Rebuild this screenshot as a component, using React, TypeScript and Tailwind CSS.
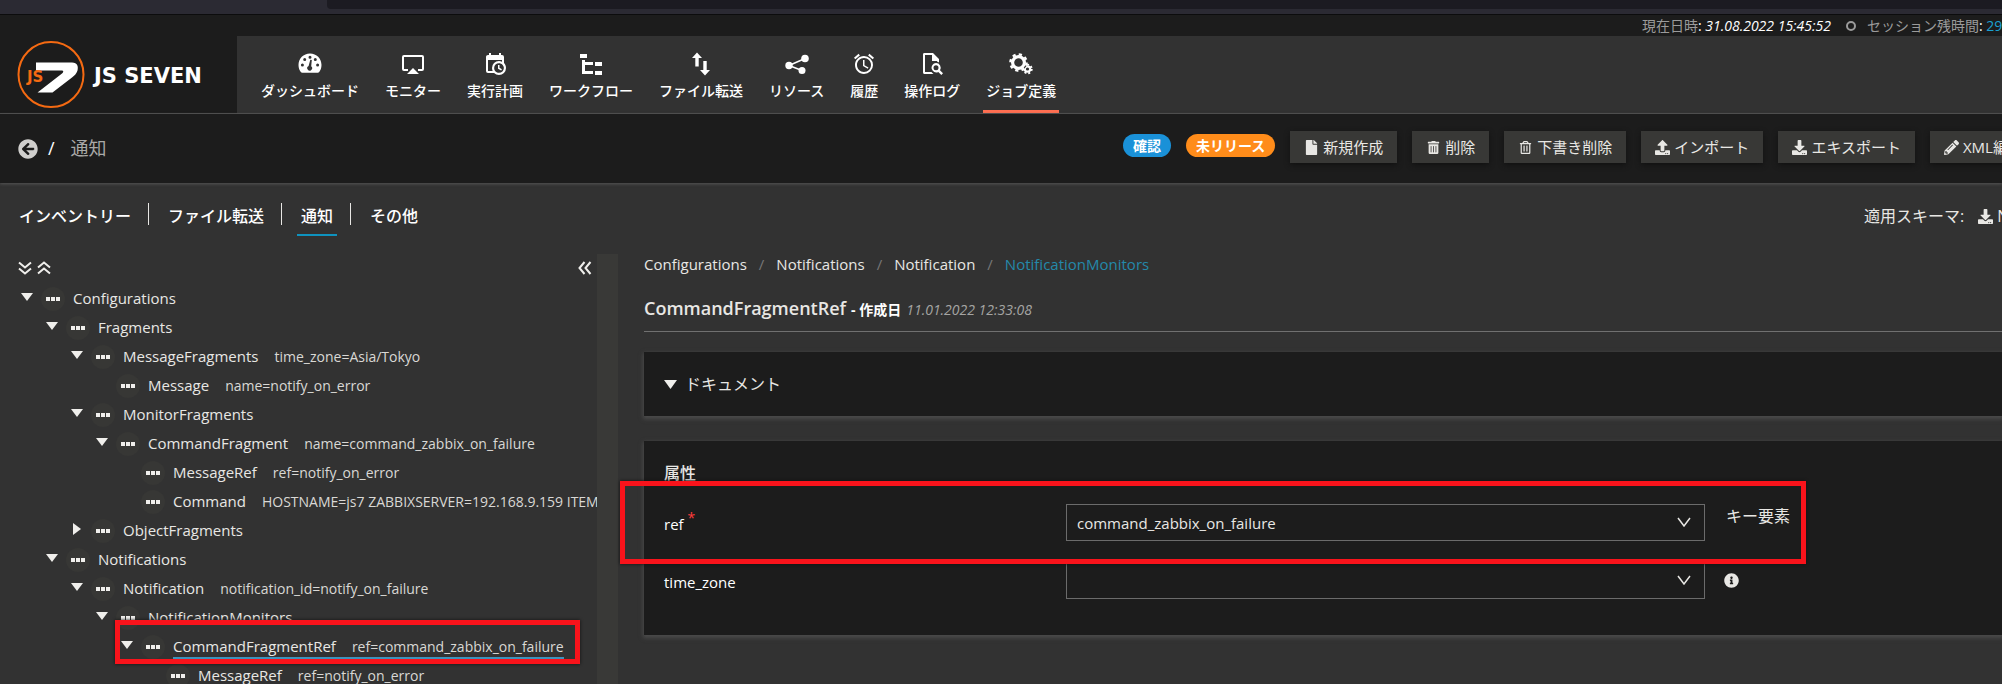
import type { ReactNode } from "react";
import {
  FaArrowCircleLeft,
  FaDownload,
  FaFile,
  FaInfoCircle,
  FaPencilAlt,
  FaRegTrashAlt,
  FaTrashAlt,
  FaUpload,
} from "react-icons/fa";
import { MdAlarm } from "react-icons/md";

const svg = "h-6 w-6 fill-current";

function GaugeIcon() {
  return (
    <svg viewBox="0 0 24 24" className={svg} aria-hidden="true">
      <path
        fillRule="evenodd"
        d="M12 1.500C5.400 1.500 0.500 6.500 0.500 13c0 3 .9 5.200 2.300 7 .4.500.8.7 1.400.7h15.600c.6 0 1-.2 1.400-.7 1.400-1.800 2.300-4 2.300-7C23.500 6.500 18.600 1.500 12 1.500ZM12 3.700a1.500 1.500 0 1 1 0 3 1.500 1.500 0 0 1 0-3ZM6.700 6a1.500 1.500 0 1 1 0 3 1.500 1.500 0 0 1 0-3ZM17.300 6a1.500 1.500 0 1 1 0 3 1.500 1.500 0 0 1 0-3ZM4.400 11.500a1.500 1.500 0 1 1 0 3 1.500 1.500 0 0 1 0-3ZM19.600 11.500a1.500 1.500 0 1 1 0 3 1.500 1.500 0 0 1 0-3ZM13.800 8l-.6 6.300a2.400 2.400 0 1 1-2.600-.3l1.700-6.200Z"
      />
    </svg>
  );
}

function MonitorIcon() {
  return (
    <svg viewBox="0 0 24 24" className={svg} aria-hidden="true">
      <path d="M6 22h12l-6-6-6 6ZM21 3H3a2 2 0 0 0-2 2v12a2 2 0 0 0 2 2h4v-2H3V5h18v12h-4v2h4a2 2 0 0 0 2-2V5a2 2 0 0 0-2-2Z" />
    </svg>
  );
}

function PlanIcon() {
  return (
    <svg viewBox="0 0 24 24" className={svg} aria-hidden="true">
      <path d="M15 13h1.500v2.820l2.440 1.410-.75 1.300L15 16.690V13m4-5H5v11h4.670c-.43-.91-.67-1.930-.67-3a7 7 0 0 1 7-7c1.070 0 2.090.24 3 .67V8M5 21a2 2 0 0 1-2-2V5c0-1.110.89-2 2-2h1V1h2v2h8V1h2v2h1a2 2 0 0 1 2 2v6.100c1.240 1.260 2 2.990 2 4.900a7 7 0 0 1-7 7c-1.910 0-3.640-.76-4.900-2H5m11-9.850A4.850 4.850 0 0 0 11.150 16c0 2.680 2.170 4.850 4.850 4.850A4.850 4.850 0 0 0 20.850 16c0-2.680-2.170-4.850-4.850-4.850Z" />
    </svg>
  );
}

function TreeIcon() {
  return (
    <svg viewBox="0 0 24 24" className={svg} aria-hidden="true">
      <path d="M1 2h7v4H1ZM16 10h7v4h-7ZM16 19h7v4h-7ZM14 13H6v6h8v3H3V8h3v2h8Z" />
    </svg>
  );
}

function TransferIcon() {
  return (
    <svg viewBox="0 0 24 24" className={svg} aria-hidden="true">
      <path d="M8 0.500 13 6H9.700v8.500H6.300V6H3ZM16 23.500 11 18h3.300V9h3.400v9H21Z" />
    </svg>
  );
}

function ShareIcon() {
  return (
    <svg viewBox="0 0 24 24" className={svg} aria-hidden="true">
      <path d="M4 13.500 20 6.500M4 13.500l13 5" fill="none" stroke="currentColor" strokeWidth="1.500" />
      <circle cx="4" cy="13.500" r="3.700" />
      <circle cx="20" cy="6.500" r="3.800" />
      <circle cx="17" cy="18.500" r="3.500" />
    </svg>
  );
}

function FileSearchIcon() {
  return (
    <svg viewBox="0 0 24 24" className={svg} aria-hidden="true">
      <path
        fillRule="evenodd"
        d="M4 1h9l6 6v3.500a6 6 0 0 0-2-1V9h-5V3H5v17h6.500a6 6 0 0 0 2 2H4a2 2 0 0 1-1-2V2.500A1.500 1.500 0 0 1 4 1ZM16 11a4.700 4.700 0 0 1 4 7.200l3 3-1.700 1.700-3-3A4.700 4.700 0 1 1 16 11Zm0 2.200a2.500 2.500 0 1 0 0 5 2.500 2.500 0 0 0 0-5Z"
      />
    </svg>
  );
}

function GearsIcon() {
  return (
    <svg viewBox="0 0 24 24" className={svg} aria-hidden="true">
      <g fill="none" stroke="currentColor">
        <circle cx="18.500" cy="17" r="2.700" strokeWidth="2.200" />
        <circle cx="18.500" cy="17" r="4.300" strokeWidth="1.800" strokeDasharray="2 1.860" />
      </g>
      <circle cx="9.500" cy="10.500" r="8.600" fill="#323232" />
      <g fill="none" stroke="currentColor">
        <circle cx="9.500" cy="10.500" r="5.900" strokeWidth="3.200" />
        <circle cx="9.500" cy="10.500" r="8.100" strokeWidth="2.400" strokeDasharray="3.200 3.162" />
      </g>
    </svg>
  );
}

function DoubleChevron({ d }: { d: string }) {
  return (
    <svg viewBox="0 0 14 14" className="h-3.5 w-3.5 fill-none stroke-[#f0efec]" strokeWidth="2" aria-hidden="true">
      <path d={d} />
    </svg>
  );
}

function Logo() {
  return (
    <svg viewBox="0 0 70 70" className="h-[70px] w-[70px] shrink-0" aria-hidden="true">
      <circle cx="35" cy="34.500" r="32.500" fill="none" stroke="#f56a12" strokeWidth="2" />
      <path
        d="M20 22.500H56c5.500 0 6.500 4 5.500 8-.8 3-3 5-5.500 7L36.500 52.500H21.500L46 33.500c2-1.600 1.500-3-.5-3H20Z"
        fill="#fff"
      />
      <text x="11" y="42" fontSize="15" fontWeight="700" fill="#f56a12" fontFamily="DejaVu Sans">
        JS
      </text>
    </svg>
  );
}

const navItems: { label: string; icon: ReactNode; active?: boolean }[] = [
  { label: "ダッシュボード", icon: <GaugeIcon /> },
  { label: "モニター", icon: <MonitorIcon /> },
  { label: "実行計画", icon: <PlanIcon /> },
  { label: "ワークフロー", icon: <TreeIcon /> },
  { label: "ファイル転送", icon: <TransferIcon /> },
  { label: "リソース", icon: <ShareIcon /> },
  { label: "履歴", icon: <MdAlarm className="h-6 w-6" /> },
  { label: "操作ログ", icon: <FileSearchIcon /> },
  { label: "ジョブ定義", icon: <GearsIcon />, active: true },
];

const actions: { label: string; icon: ReactNode }[] = [
  { label: "新規作成", icon: <FaFile /> },
  { label: "削除", icon: <FaTrashAlt className="h-[13px]" /> },
  { label: "下書き削除", icon: <FaRegTrashAlt className="h-[13px]" /> },
  { label: "インポート", icon: <FaUpload /> },
  { label: "エキスポート", icon: <FaDownload /> },
  { label: "XML編集", icon: <FaPencilAlt /> },
];

const tabs = ["インベントリー", "ファイル転送", "通知", "その他"];

type Node = {
  indent: string;
  name: string;
  attr?: string;
  caret?: "open" | "closed";
  selected?: boolean;
};

const nodes: Node[] = [
  { indent: "pl-[15px]", name: "Configurations", caret: "open" },
  { indent: "pl-[40px]", name: "Fragments", caret: "open" },
  { indent: "pl-[65px]", name: "MessageFragments", attr: "time_zone=Asia/Tokyo", caret: "open" },
  { indent: "pl-[90px]", name: "Message", attr: "name=notify_on_error" },
  { indent: "pl-[65px]", name: "MonitorFragments", caret: "open" },
  { indent: "pl-[90px]", name: "CommandFragment", attr: "name=command_zabbix_on_failure", caret: "open" },
  { indent: "pl-[115px]", name: "MessageRef", attr: "ref=notify_on_error" },
  { indent: "pl-[115px]", name: "Command", attr: "HOSTNAME=js7 ZABBIXSERVER=192.168.9.159 ITEM" },
  { indent: "pl-[65px]", name: "ObjectFragments", caret: "closed" },
  { indent: "pl-[40px]", name: "Notifications", caret: "open" },
  { indent: "pl-[65px]", name: "Notification", attr: "notification_id=notify_on_failure", caret: "open" },
  { indent: "pl-[90px]", name: "NotificationMonitors", caret: "open" },
  {
    indent: "pl-[115px]",
    name: "CommandFragmentRef",
    attr: "ref=command_zabbix_on_failure",
    caret: "open",
    selected: true,
  },
  { indent: "pl-[140px]", name: "MessageRef", attr: "ref=notify_on_error" },
];

function TreeRow({ node }: { node: Node }) {
  return (
    <li className={`flex h-[29px] items-center whitespace-nowrap ${node.indent}`}>
      <span className="flex w-6 shrink-0 justify-center pb-[3px]">
        {node.caret === "open" && (
          <svg viewBox="0 0 12 8" className="h-2 w-3 fill-[#f0efec]" aria-hidden="true">
            <path d="M0 0h12L6 8Z" />
          </svg>
        )}
        {node.caret === "closed" && (
          <svg viewBox="0 0 8 12" className="h-3 w-2 fill-[#f0efec]" aria-hidden="true">
            <path d="M0 0v12l8-6Z" />
          </svg>
        )}
      </span>
      <button
        type="button"
        aria-label={`${node.name} menu`}
        className="mx-[2px] flex h-6 w-6 shrink-0 items-center justify-center rounded-full bg-[#373735]"
      >
        <svg viewBox="0 0 14 4" className="h-1 w-3.5 fill-[#f0efec]" aria-hidden="true">
          <path d="M0 0h4v4H0ZM5 0h4v4H5ZM10 0h4v4h-4Z" />
        </svg>
      </button>
      <a
        href="#node"
        className={`ml-[6px] flex h-6 items-baseline gap-4 border-b-2 leading-[22px] ${
          node.selected ? "border-[#3d92bd]" : "border-transparent"
        }`}
      >
        <span className="text-[15px]">{node.name}</span>
        {node.attr && <span className="text-[14px] text-[#d9d8d5]">{node.attr}</span>}
      </a>
    </li>
  );
}

function SelectBox({ id, value }: { id: string; value: string }) {
  return (
    <div className="relative">
      <select
        id={id}
        defaultValue={value}
        className="block h-[37px] w-full appearance-none border border-[#6b6b6b] bg-[#1c1c1c] px-2.5 pt-0.5 text-[15px] text-[#e8e7e4]"
      >
        <option value={value}>{value}</option>
      </select>
      <svg
        viewBox="0 0 14 10"
        className="pointer-events-none absolute top-[13px] right-[14px] h-2.5 w-3.5 fill-none stroke-[#e8e7e4]"
        strokeWidth="1.500"
        aria-hidden="true"
      >
        <path d="M1 1l6 8 6-8" />
      </svg>
    </div>
  );
}

const card = "bg-[#1c1c1c] pl-5 shadow-[0_2px_4px_1px_#4b4b4b]";

export default function App() {
  return (
    <div className="relative flex h-screen flex-col overflow-hidden bg-[#323232] font-['Open_Sans','Noto_Sans_CJK_JP',sans-serif] text-[15px] text-[#e8e7e4]">
      <div className="h-[15px] shrink-0 border-b border-[#0c0c0d] bg-[#2b2a33] pl-[327px]">
        <div className="h-[9px] rounded-bl bg-[#1c1b22]" />
      </div>

      <div className="flex h-[21px] shrink-0 items-center justify-end bg-[#1c1c1c] text-[14px]">
        <div className="flex w-[360px] shrink-0 items-center whitespace-nowrap text-[#9b9b9b]">
          <span>現在日時</span>
          <span className="text-white">
            : <i>31.08.2022 15:45:52</i>
          </span>
          <span className="mr-[11px] ml-[15px] h-2.5 w-2.5 shrink-0 rounded-full border-2 border-[#9b9b9b]" />
          <span>セッション残時間</span>
          <span className="text-white">:&nbsp;</span>
          <span className="text-[#1ba0d0]">29m</span>
        </div>
      </div>

      <header className="flex h-[78px] shrink-0 border-b border-[#4d4d4d] bg-[#323232]">
        <a href="#home" className="flex w-[237px] shrink-0 items-center gap-2 bg-[#1c1c1c] pl-4 text-white">
          <Logo />
          <span className="pt-1 font-['DejaVu_Sans'] text-[21px] font-bold whitespace-nowrap">JS SEVEN</span>
        </a>
        <nav className="ml-[21px] flex gap-5">
          {navItems.map((item) => (
            <a
              key={item.label}
              href="#nav"
              className={`flex flex-col items-center border-b-[3px] px-[3px] pt-4 text-[14px] leading-5 font-medium whitespace-nowrap text-white ${
                item.active ? "border-[#ff6f52]" : "border-transparent"
              }`}
            >
              {item.icon}
              <span className="mt-[5px]">{item.label}</span>
            </a>
          ))}
        </nav>
      </header>

      <div className="flex h-[69px] shrink-0 justify-between bg-[#1c1c1c] shadow-[0_1px_3px_#555]">
        <div className="flex items-center pl-[18px] text-[18px] text-[#a9a9a7]">
          <a href="#back" aria-label="back" className="text-[#d0cfcd]">
            <FaArrowCircleLeft className="h-5 w-5" />
          </a>
          <span className="mr-4 ml-2.5 text-white">/</span>
          <h1>通知</h1>
        </div>
        <div className="flex w-[879px] shrink-0 items-start gap-[15px] pt-[17px]">
          <span className="mt-[3px] h-[23px] shrink-0 rounded-full bg-[#1a91d8] px-2.5 text-[14px] leading-[23px] font-bold text-white">
            確認
          </span>
          <span className="mt-[3px] h-[23px] shrink-0 rounded-full bg-[#ff8c1a] px-2.5 text-[14px] leading-[23px] font-bold text-white">
            未リリース
          </span>
          {actions.map((a) => (
            <button
              key={a.label}
              type="button"
              className="flex h-8 shrink-0 items-center gap-1 bg-[#383836] px-[14px] whitespace-nowrap shadow-[0_2px_5px_#111]"
            >
              {a.icon}
              {a.label}
            </button>
          ))}
        </div>
      </div>

      <div className="flex h-[71px] shrink-0 justify-between">
        <nav className="flex pt-5 font-medium">
          {tabs.map((t, i) => (
            <div
              key={t}
              className={`h-[22px] pr-[13px] pl-[15px] ${
                i < tabs.length - 1 ? "border-r border-[#e8e7e4]" : ""
              }`}
            >
              <a
                href="#tab"
                className={`block h-[33px] px-1 text-[16px] leading-[26px] whitespace-nowrap text-white ${
                  t === "通知" ? "border-b-2 border-[#0f93bf]" : ""
                }`}
              >
                {t}
              </a>
            </div>
          ))}
        </nav>
        <div className="flex w-[138px] shrink-0 items-center gap-[14px] pb-[5px] text-[16px] whitespace-nowrap">
          <span>適用スキーマ:</span>
          <a href="#schema" className="flex items-center gap-1">
            <FaDownload className="h-[15px] w-[15px] shrink-0" />
            Notification
          </a>
        </div>
      </div>

      <div className="flex min-h-0 flex-1">
        <aside className="w-[597px] shrink-0 overflow-hidden">
          <div className="flex h-[30px] items-center justify-between pr-[5px] pb-[3px] pl-[18px]">
            <div className="flex gap-[5px]">
              <button type="button" aria-label="expand all">
                <DoubleChevron d="M1 1.500l6 5 6-5M1 7.500l6 5 6-5" />
              </button>
              <button type="button" aria-label="collapse all">
                <DoubleChevron d="M1 6.500l6-5 6 5M1 12.500l6-5 6 5" />
              </button>
            </div>
            <button type="button" aria-label="hide panel">
              <DoubleChevron d="M6.500 1l-5 6 5 6M12.500 1l-5 6 5 6" />
            </button>
          </div>
          <ul>
            {nodes.map((n, i) => (
              <TreeRow key={i} node={n} />
            ))}
          </ul>
        </aside>
        <div className="w-[21px] shrink-0 bg-[#393937]" />

        <main className="min-w-0 flex-1 pl-[26px]">
          <nav className="flex h-[21px] items-center gap-3 whitespace-nowrap">
            <a href="#c">Configurations</a>
            <span className="text-[#777]">/</span>
            <a href="#n">Notifications</a>
            <span className="text-[#777]">/</span>
            <a href="#o">Notification</a>
            <span className="text-[#777]">/</span>
            <a href="#m" className="text-[#2489aa]">
              NotificationMonitors
            </a>
          </nav>
          <div className="mt-5 flex h-[37px] items-baseline gap-[5px] border-b border-[#707070] whitespace-nowrap">
            <h2 className="text-[18px] font-semibold">CommandFragmentRef</h2>
            <span className="text-[14px] font-bold text-white">- 作成日</span>
            <i className="text-[14px] text-[#a5a5a3]">11.01.2022 12:33:08</i>
          </div>

          <section className={`mt-5 flex h-16 items-center gap-2 ${card}`}>
            <svg viewBox="0 0 13 9" className="h-[9px] w-[13px] fill-[#f0efec]" aria-hidden="true">
              <path d="M0 0h13L6.500 9Z" />
            </svg>
            <h3 className="text-[16px]">ドキュメント</h3>
          </section>

          <section className={`mt-[25px] h-[194px] pt-5 ${card}`}>
            <h3 className="h-[43px] text-[16px] leading-6 font-medium">属性</h3>
            <div className="grid grid-cols-[402px_639px_1fr] gap-y-[21px]">
              <label htmlFor="ref" className="self-center pt-[3px] leading-6 text-white">
                ref <sup className="text-[14px] text-[#ff3b3b]">*</sup>
              </label>
              <SelectBox id="ref" value="command_zabbix_on_failure" />
              <span className="pl-[21px] text-[16px] leading-6">キー要素</span>
              <label htmlFor="time_zone" className="self-center pt-[3px] leading-6 text-white">
                time_zone
              </label>
              <SelectBox id="time_zone" value="" />
              <span className="self-center pl-[19px]">
                <FaInfoCircle className="h-[15px] w-[15px]" />
              </span>
            </div>
          </section>
        </main>
      </div>

      <div className="pointer-events-none absolute top-[620px] left-[115px] h-[44px] w-[465px] border-[5px] border-[#f9131b] shadow-[0_0_3px_#111]" />
      <div className="pointer-events-none absolute top-[481px] left-[620px] h-[83px] w-[1186px] border-[5px] border-[#f9131b] shadow-[0_0_3px_#111]" />
    </div>
  );
}
